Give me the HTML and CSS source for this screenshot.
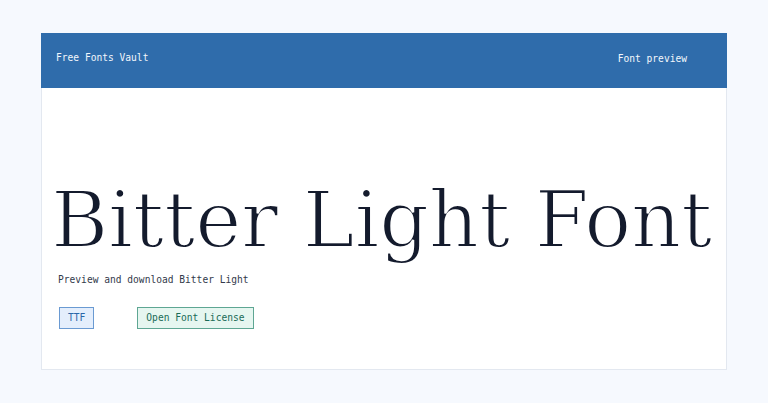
FILE: index.html
```html
<!DOCTYPE html>
<html lang="en">
<head>
<meta charset="utf-8">
<title>Bitter Light Font - Free Fonts Vault</title>
<link rel="stylesheet" href="styles.css">
</head>
<body>
<main class="card">
  <header class="topbar">
    <span class="brand">Free Fonts Vault</span>
    <span class="nav-link">Font preview</span>
  </header>
  <section class="preview">
    <h1 class="specimen">Bitter Light Font</h1>
    <p class="lead">Preview and download Bitter Light</p>
    <div class="tags">
      <span class="tag tag-format">TTF</span>
      <span class="tag tag-license">Open Font License</span>
    </div>
  </section>
</main>
</body>
</html>
```
FILE: styles.css
```css
html, body {
  margin: 0;
  padding: 0;
}

body {
  background: #f6f9fe;
  font-family: "DejaVu Sans Mono", "Liberation Mono", monospace;
  padding: 33px 41px;
  height: 403px;
  box-sizing: border-box;
}

.card {
  background: #ffffff;
  border: 1px solid #e3e8f0;
  height: 337px;
  box-sizing: border-box;
  display: flex;
  flex-direction: column;
}

.topbar {
  flex-shrink: 0;
  background: #2f6cab;
  color: #f3f7fc;
  height: 55px;
  box-sizing: border-box;
  margin: -1px -1px 0;
  display: flex;
  justify-content: space-between;
  align-items: flex-start;
  padding: 19px 40px 0 15px;
  font-size: 9.6px;
  line-height: 11px;
  font-weight: 500;
}

.nav-link {
  margin-top: 1px;
}

.preview {
  padding: 92px 16px 0 16px;
}

/* Large specimen line; the white stroke trims the glyphs down to a light weight */
.specimen {
  margin: 0 0 0 -7px;
  font-family: "DejaVu Serif", serif;
  font-weight: 300;
  font-size: 78px;
  line-height: 80px;
  letter-spacing: -0.2px;
  color: #141b2d;
  white-space: nowrap;
  -webkit-text-stroke: 2px #ffffff;
  paint-order: fill stroke;
}

.lead {
  margin: 14px 0 0 0;
  font-size: 9.6px;
  line-height: 11px;
  color: #333a4b;
}

.tags {
  display: flex;
  gap: 43px;
  margin: 22px 0 0 1px;
}

.tag {
  font-size: 9.6px;
  line-height: 20px;
  padding: 0 8px;
  border: 1px solid;
}

.tag-format {
  background: #e4eefc;
  border-color: #6a9ad2;
  color: #2a66a8;
}

.tag-license {
  background: #e6f6f0;
  border-color: #5ea693;
  color: #1a6b57;
}
```
